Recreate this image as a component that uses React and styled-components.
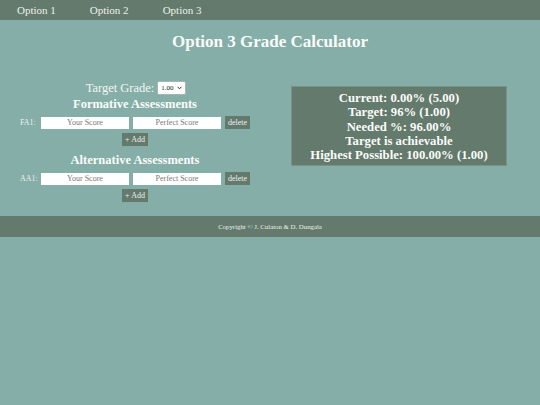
import React from "react"
import styled, { createGlobalStyle } from "styled-components"

const GlobalStyle = createGlobalStyle`
  html, body {
    margin: 0;
    padding: 0;
    background: #84aea7;
    font-family: "Liberation Serif", "Times New Roman", serif;
    color: #f4f6f2;
  }
`

const Nav = styled.nav`
  display: flex;
  height: 20px;
  align-items: center;
  background: #637a6c;
  padding-left: 17px;
  gap: 34px;
  font-size: 11px;
`

const NavItem = styled.span`
  color: #eef1ec;
`

const Title = styled.h1`
  margin: 0;
  padding-top: 12px;
  height: 40px;
  box-sizing: border-box;
  text-align: center;
  font-size: 17px;
  font-weight: bold;
  color: #fbfcfa;
`

const Main = styled.div`
  display: grid;
  grid-template-columns: 270px 1fr;
  padding-top: 20px;
  height: 155px;
  box-sizing: border-box;
`

const Left = styled.div`
  display: flex;
  flex-direction: column;
  align-items: center;
`

const TargetRow = styled.div`
  display: flex;
  align-items: center;
  gap: 3px;
  font-size: 12.5px;
  height: 16px;
  padding-left: 2px;
`

const SelectWrap = styled.span`
  position: relative;
  display: inline-flex;
`

const Select = styled.select`
  appearance: none;
  font-family: "Liberation Serif", serif;
  font-size: 7px;
  width: 29px;
  height: 14px;
  padding: 0 0 0 3px;
  border: 1px solid #a9b5b0;
  border-radius: 2px;
  background: #fff;
  color: #222;
`

const Chevron = styled.svg`
  position: absolute;
  right: 4px;
  top: 5px;
  pointer-events: none;
`

const SectionTitle = styled.h2`
  margin: 0;
  margin-top: ${p => p.$top || 0}px;
  font-size: 12.5px;
  font-weight: bold;
  line-height: 15px;
  color: #fbfcfa;
`

const Row = styled.div`
  display: flex;
  align-items: center;
  gap: 4px;
  margin-top: 4px;
  height: 13px;
  font-size: 8px;
`

const RowLabel = styled.span`
  width: 17px;
  color: #eef1ec;
`

const ScoreInput = styled.input`
  width: 88px;
  height: 12px;
  box-sizing: border-box;
  border: none;
  padding: 0;
  text-align: center;
  font-family: "Liberation Serif", serif;
  font-size: 8px;
  background: #fff;
  &::placeholder {
    color: #777;
  }
`

const SmallButton = styled.button`
  font-family: "Liberation Serif", serif;
  font-size: 8px;
  height: 13px;
  padding: 0 3px;
  border: none;
  background: #637a6c;
  color: #eef1ec;
  margin-top: ${p => p.$top || 0}px;
`

const Right = styled.div`
  padding-left: 21px;
  padding-top: 6px;
`

const ResultBox = styled.div`
  width: 216px;
  height: 80px;
  box-sizing: border-box;
  background: #637a6c;
  border: 1px solid #7a9484;
  padding-top: 4px;
  text-align: center;
  font-size: 12.7px;
  font-weight: bold;
  line-height: 14.3px;
  color: #fbfcfa;
`

const Footer = styled.footer`
  height: 21px;
  margin-top: 1px;
  display: flex;
  align-items: center;
  justify-content: center;
  background: #637a6c;
  font-size: 6.8px;
  color: #eef1ec;
`

const AssessRow = ({ label }) => (
  <Row>
    <RowLabel>{label}:</RowLabel>
    <ScoreInput placeholder="Your Score" />
    <ScoreInput placeholder="Perfect Score" />
    <SmallButton>delete</SmallButton>
  </Row>
)

const App = () => {
  return (
    <>
      <GlobalStyle />
      <Nav>
        <NavItem>Option 1</NavItem>
        <NavItem>Option 2</NavItem>
        <NavItem>Option 3</NavItem>
      </Nav>
      <Title>Option 3 Grade Calculator</Title>
      <Main>
        <Left>
          <TargetRow>
            Target Grade:
            <SelectWrap>
              <Select defaultValue="1.00">
                <option>1.00</option>
                <option>1.25</option>
                <option>1.50</option>
                <option>1.75</option>
                <option>2.00</option>
              </Select>
              <Chevron width="5" height="4" viewBox="0 0 5 4">
                <path d="M0.6 0.8 L2.5 2.8 L4.4 0.8" fill="none" stroke="#333" strokeWidth="1" />
              </Chevron>
            </SelectWrap>
          </TargetRow>
          <SectionTitle $top={1}>Formative Assessments</SectionTitle>
          <AssessRow label="FA1" />
          <SmallButton $top={4}>+ Add</SmallButton>
          <SectionTitle $top={7}>Alternative Assessments</SectionTitle>
          <AssessRow label="AA1" />
          <SmallButton $top={4}>+ Add</SmallButton>
        </Left>
        <Right>
          <ResultBox>
            <div>Current: 0.00% (5.00)</div>
            <div>Target: 96% (1.00)</div>
            <div>Needed %: 96.00%</div>
            <div>Target is achievable</div>
            <div>Highest Possible: 100.00% (1.00)</div>
          </ResultBox>
        </Right>
      </Main>
      <Footer>Copyright © J. Culaton &amp; D. Dungala</Footer>
    </>
  )
}

export default App
